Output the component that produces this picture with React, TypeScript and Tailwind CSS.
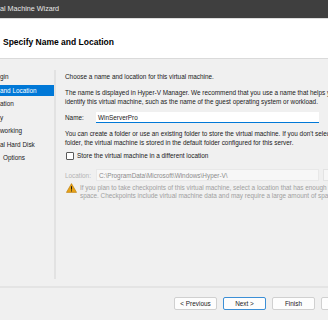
import React from 'react';

const navItems = [
  { label: 'gin', selected: false },
  { label: 'and Location', selected: true },
  { label: 'ation', selected: false },
  { label: 'y', selected: false },
  { label: 'working', selected: false },
  { label: 'al Hard Disk', selected: false },
  { label: 'Options', selected: false, indent: true },
];

function WarningIcon() {
  return (
    <svg width="11" height="10" viewBox="0 0 11 10" className="shrink-0">
      <path d="M5.5 0.6 L10.6 9.4 L0.4 9.4 Z" fill="#e8a317" stroke="#b97a0c" strokeWidth="0.6" strokeLinejoin="round" />
      <rect x="5" y="3.2" width="1" height="3.4" fill="#1a1a1a" />
      <rect x="5" y="7.4" width="1" height="1" fill="#1a1a1a" />
    </svg>
  );
}

export default function App() {
  return (
    <div
      className="w-[328px] h-[320px] overflow-hidden bg-[#f0f0f0] flex flex-col text-[#1a1a1a]"
      style={{ fontFamily: '"Liberation Sans", Arial, sans-serif' }}
    >
      {/* title bar */}
      <div className="h-[18px] shrink-0 bg-[#3f3f3f] flex items-center text-[7.2px] text-[#e8e8e8]">
        al Machine Wizard
      </div>

      {/* header */}
      <div className="h-[41px] shrink-0 bg-white border-t border-[#dcdcdc] border-b border-b-[#dadada] flex items-center pl-[3px]">
        <h1 className="text-[8.5px] font-bold text-black mt-[7px]">Specify Name and Location</h1>
      </div>

      {/* body */}
      <div className="flex flex-1 min-h-0">
        <div className="w-[54px] shrink-0 pt-[11.5px] text-[6.4px]">
          {navItems.map((item) => (
            <div key={item.label} className="h-[13.45px] flex items-center">
              <div
                className={`w-full h-[11.5px] flex items-center whitespace-nowrap ${
                  item.selected ? 'bg-[#0078d7] text-white' : ''
                } ${item.indent ? 'pl-[3px]' : ''}`}
              >
                {item.label}
              </div>
            </div>
          ))}
        </div>
        <div className="w-[2px] shrink-0 bg-[#e2e2e2] mt-[11px] h-[209px]" />

        <div className="pl-[9px] pt-[13px] text-[6.4px] leading-[9px] whitespace-nowrap w-[420px] shrink-0">
          <p>Choose a name and location for this virtual machine.</p>
          <p className="mt-[7px]">
            The name is displayed in Hyper-V Manager. We recommend that you use a name that helps you easily
            <br />
            identify this virtual machine, such as the name of the guest operating system or workload.
          </p>

          <div className="flex items-center mt-[6px] h-[11px]">
            <span className="w-[31px]">Name:</span>
            <div className="w-[223px] h-[11px] bg-white border-b-[1.5px] border-[#0078d7] flex items-center pl-[2px]">
              WinServerPro
            </div>
          </div>

          <p className="mt-[6px]">
            You can create a folder or use an existing folder to store the virtual machine. If you don't select a
            <br />
            folder, the virtual machine is stored in the default folder configured for this server.
          </p>

          <label className="flex items-center mt-[4px] h-[9px]">
            <span className="w-[8px] h-[8px] ml-[1px] border border-[#5a5a5a] rounded-[1px] bg-white mr-[3px]" />
            Store the virtual machine in a different location
          </label>

          <div className="flex items-center mt-[9px] h-[12px]">
            <span className="w-[31px] text-[#b4b4b4]">Location:</span>
            <div className="w-[223px] h-[12px] bg-[#f7f7f7] border border-[#e8e8e8] flex items-center pl-[2px] text-[#8c8c8c]">
              C:\ProgramData\Microsoft\Windows\Hyper-V\
            </div>
            <div className="ml-[4px] w-[44px] h-[12px] bg-[#f7f7f7] border border-[#e3e3e3]" />
          </div>

          <div className="flex items-start mt-[2px] text-[#a0a0a0] leading-[8px]">
            <div className="ml-[1px] mr-[3px]">
              <WarningIcon />
            </div>
            <p className="mt-[1px]">
              If you plan to take checkpoints of this virtual machine, select a location that has enough free
              <br />
              space. Checkpoints include virtual machine data and may require a large amount of space.
            </p>
          </div>
        </div>
      </div>

      {/* footer */}
      <div className="h-[34px] shrink-0 border-t-2 border-[#e4e4e4] flex items-start pt-[9px] pl-[174px] gap-[6px] text-[6.4px]">
        <button className="w-[43px] h-[13px] shrink-0 bg-[#fdfdfd] border border-[#d0d0d0] rounded-[2px]">&lt; Previous</button>
        <button className="w-[43px] h-[13px] shrink-0 bg-[#fdfdfd] border border-[#3c8fd6] rounded-[2px]">Next &gt;</button>
        <button className="w-[43px] h-[13px] shrink-0 bg-[#fdfdfd] border border-[#d0d0d0] rounded-[2px]">Finish</button>
        <button className="w-[43px] h-[13px] shrink-0 bg-[#fdfdfd] border border-[#d0d0d0] rounded-[2px]">Cancel</button>
      </div>
    </div>
  );
}
